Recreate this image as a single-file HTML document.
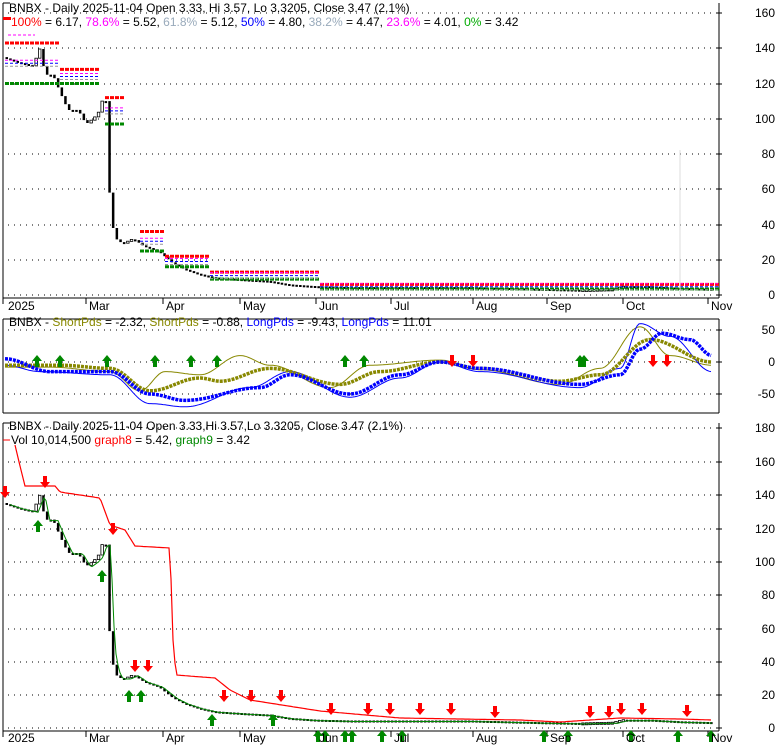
<!DOCTYPE html>
<html><head><meta charset="utf-8"><style>
html,body{margin:0;padding:0;background:#fff;width:780px;height:745px;overflow:hidden}
svg{display:block}
text{font-family:"Liberation Sans",sans-serif;font-size:12px}
</style></head><body>
<svg id="s" width="780" height="745" xmlns="http://www.w3.org/2000/svg">
<rect width="780" height="745" fill="#fff"/>
<g id="g"></g>
<text x="9" y="12">BNBX - Daily 2025-11-04 Open 3.33, Hi 3.57, Lo 3.3205, Close 3.47 (2.1%)</text>
<text x="11" y="26"><tspan fill="#f00">100%</tspan> = 6.17, <tspan fill="#f0f">78.6%</tspan> = 5.52, <tspan fill="#9ab">61.8%</tspan> = 5.12, <tspan fill="#00f">50%</tspan> = 4.80, <tspan fill="#9ab">38.2%</tspan> = 4.47, <tspan fill="#f0f">23.6%</tspan> = 4.01, <tspan fill="#0a0">0%</tspan> = 3.42</text>
<rect x="3" y="17" width="8" height="3" fill="#f00"/>
<g text-anchor="end">
<text x="775" y="17">160</text><text x="775" y="52">140</text><text x="775" y="88">120</text><text x="775" y="123">100</text><text x="775" y="158">80</text><text x="775" y="193">60</text><text x="775" y="229">40</text><text x="775" y="264">20</text><text x="775" y="299">0</text>
<text x="775" y="334">50</text><text x="775" y="366">0</text><text x="775" y="398">-50</text>
<text x="775" y="432">180</text><text x="775" y="466">160</text><text x="775" y="499">140</text><text x="775" y="533">120</text><text x="775" y="566">100</text><text x="775" y="599">80</text><text x="775" y="633">60</text><text x="775" y="666">40</text><text x="775" y="699">20</text><text x="775" y="732">0</text>
</g>
<g font-size="12">
<text x="8" y="310">2025</text><text x="89" y="310">Mar</text><text x="166" y="310">Apr</text><text x="243" y="310">May</text><text x="319" y="310">Jun</text><text x="394" y="310">Jul</text><text x="476" y="310">Aug</text><text x="550" y="310">Sep</text><text x="626" y="310">Oct</text><text x="711" y="310">Nov</text>
<text x="8" y="742">2025</text><text x="89" y="742">Mar</text><text x="166" y="742">Apr</text><text x="243" y="742">May</text><text x="319" y="742">Jun</text><text x="394" y="742">Jul</text><text x="476" y="742">Aug</text><text x="550" y="742">Sep</text><text x="626" y="742">Oct</text><text x="711" y="742">Nov</text>
</g>
<text x="9" y="326">BNBX - <tspan fill="#880">ShortPds</tspan> = -2.32, <tspan fill="#880">ShortPds</tspan> = -0.88, <tspan fill="#00f">LongPds</tspan> = -9.43, <tspan fill="#00f">LongPds</tspan> = 11.01</text>
<text x="9" y="430">BNBX - Daily 2025-11-04 Open 3.33,Hi 3.57,Lo 3.3205, Close 3.47 (2.1%)</text>
<text x="11" y="444">Vol 10,014,500 <tspan fill="#f00">graph8</tspan> = 5.42, <tspan fill="#080">graph9</tspan> = 3.42</text>
<line x1="3" y1="440" x2="10" y2="440" stroke="#f00"/>
</svg>
<script>
var g=document.getElementById('g'),h='';
function L(x1,y1,x2,y2,c,w,d){h+='<line x1="'+x1+'" y1="'+y1+'" x2="'+x2+'" y2="'+y2+'" stroke="'+c+'" stroke-width="'+(w||1)+'"'+(d?' stroke-dasharray="'+d+'"':'')+'/>';}
function P(pts,c,w,d){h+='<polyline fill="none" points="'+pts.map(function(p){return p[0]+','+p[1].toFixed(1)}).join(' ')+'" stroke="'+c+'" stroke-width="'+w+'"'+(d?' stroke-dasharray="'+d+'"':'')+'/>';}
function interp(k,x,sm){for(var i=0;i<k.length-1;i++){if(x<=k[i+1][0]){var t=(x-k[i][0])/(k[i+1][0]-k[i][0]);if(sm)t=(1-Math.cos(Math.PI*t))/2;return k[i][1]+t*(k[i+1][1]-k[i][1]);}}return k[k.length-1][1];}
L(3,3,3,298,'#000');L(3,3,10,3,'#000');L(3,298,719,298,'#000');L(719,3,719,298,'#000');
L(3,319,719,319,'#000');L(3,319,3,413,'#000');L(3,413,719,413,'#000');L(719,319,719,413,'#000');
L(3,423,3,731,'#000');L(3,423,10,423,'#000');L(3,731,719,731,'#000');L(719,423,719,731,'#000');
var mx=[3,86,163,240,316,391,473,547,623,708];
mx.forEach(function(x){L(x,298,x,304,'#000');L(x,731,x,737,'#000');});
function grid(ys){ys.forEach(function(y){L(8,y,716,y,'#000',1,'1 5');L(716,y,722,y,'#000');});}
grid([13,48,84,119,154,189,225,260,295]);grid([330,362,394]);grid([428,462,495,529,562,595,629,662,695,728]);
var K=[[5,135],[20,132],[35,130],[42,140],[47,125],[55,125],[62,115],[70,105],[80,105],[88,97],[95,100],[100,103],[104,110],[108,110],[110,70],[113,45],[116,35],[120,30],[128,30],[135,32],[145,28],[160,25],[175,18],[185,15],[200,12],[215,10],[240,9],[270,8],[290,6],[316,5],[350,4.5],[400,4.5],[470,4.5],[540,3.5],[580,3],[615,3.5],[625,5],[650,5],[680,4],[712,3.5]];
function candles(y0,s){for(var x=5;x<=712;x+=3.67){var p=interp(K,x),q=interp(K,x+3.67);var a=y0-p*s,b=y0-q*s;var t=Math.min(a,b),hh=Math.max(2,Math.abs(a-b));var up=q>p;h+='<rect x="'+(x+0.5).toFixed(1)+'" y="'+t.toFixed(1)+'" width="2.5" height="'+hh.toFixed(1)+'" fill="'+(up?'#fff':'#000')+'" stroke="#000" stroke-width="'+(up?0.8:0)+'"/>';}}
candles(295,1.7625);candles(728,1.667);
[[5,45,143,120],[45,60,143,120],[60,100,128,120],[105,125,112,97],[140,165,36,25],[165,210,22,16],[210,320,13,9],[320,720,6,3.4]].forEach(function(s){var yt=295-s[2]*1.7625,yb=295-s[3]*1.7625;L(s[0],yt,s[1],yt,'#f00',3,'4 1');L(s[0],yb,s[1],yb,'#080',3,'4 1');var m=(yt+yb)/2;L(s[0],m-3,s[1],m-3,'#f0f',1,'3 2');L(s[0],m,s[1],m,'#00f',1,'3 2');L(s[0],m+3,s[1],m+3,'#999',1,'3 2');});
L(8,35,35,35,'#f0f',1,'3 2');L(680,150,680,295,'#ddd',1);
var R=[[15,445],[20,466],[25,486],[55,486],[60,492],[100,498],[110,525],[125,530],[135,546],[170,548],[173,640],[176,675],[215,678],[230,690],[250,700],[320,711],[400,718],[520,720],[560,722],[620,718],[680,719],[712,720]];
var pr=[];for(var x=15;x<=712;x+=2)pr.push([x,interp(R,x)]);P(pr,'#f00',1.2);
var gr=[];for(var x=10;x<=712;x+=2)gr.push([x,728-interp(K,x-3)*1.667+1]);P(gr,'#080',1);
var OT=[[5,-5],[60,-5],[110,-10],[150,-45],[200,-25],[220,-30],[270,-10],[340,-35],[380,-15],[440,0],[480,-10],[560,-30],[600,-20],[650,35],[712,0]];
var BT=[[5,5],[50,-15],[110,-15],[150,-50],[185,-60],[260,-40],[290,-20],[350,-50],[400,-20],[440,0],[480,-10],[580,-35],[620,-20],[640,20],[662,45],[690,35],[712,10]];
var OS=[[5,-8],[50,-8],[110,-15],[140,-45],[165,-15],[200,-20],[240,10],[270,-5],[330,-40],[370,-5],[440,3],[480,-12],[560,-35],[600,-10],[640,55],[670,10],[712,-5]];
var BS=[[5,-5],[40,-15],[110,-20],[150,-65],[185,-70],[250,-40],[290,-15],[350,-55],[400,-25],[440,0],[480,-15],[580,-40],[620,-10],[640,60],[670,40],[712,-15]];
function osc(k,c,w,dash){var a=[];for(var x=5;x<=712;x+=2)a.push([x,362-interp(k,x,1)*0.64]);P(a,c,w,dash);}
osc(OS,'#880',1);osc(BS,'#00f',1);osc(OT,'#880',3.5,'3 1');osc(BT,'#00f',3.5,'3 1');
function up(x,y){h+='<path d="M'+x+' '+(y-10)+' l-5 6 h3 v6 h4 v-6 h3 z" fill="#080"/>';}
function dn(x,y){h+='<path d="M'+x+' '+(y+10)+' l-5 -6 h3 v-6 h4 v6 h3 z" fill="#f00"/>';}
[37,60,107,155,191,217,345,364,580,584].forEach(function(x){up(x,365);});
[452,473,653,667].forEach(function(x){dn(x,357);});
[[5,488],[45,478],[113,525],[135,662],[148,662],[224,692],[251,692],[281,692],[331,705],[368,705],[390,705],[420,705],[451,705],[495,708],[590,708],[609,708],[621,705],[642,705],[687,707]].forEach(function(a){dn(a[0],a[1]);});
[[38,530],[102,580],[129,700],[141,700],[212,724],[273,724],[318,740],[325,740],[345,740],[352,740],[382,740],[402,740],[544,740],[568,740],[631,740],[678,740],[711,740]].forEach(function(a){up(a[0],a[1]);});
g.innerHTML=h;
</script>
</body></html>
